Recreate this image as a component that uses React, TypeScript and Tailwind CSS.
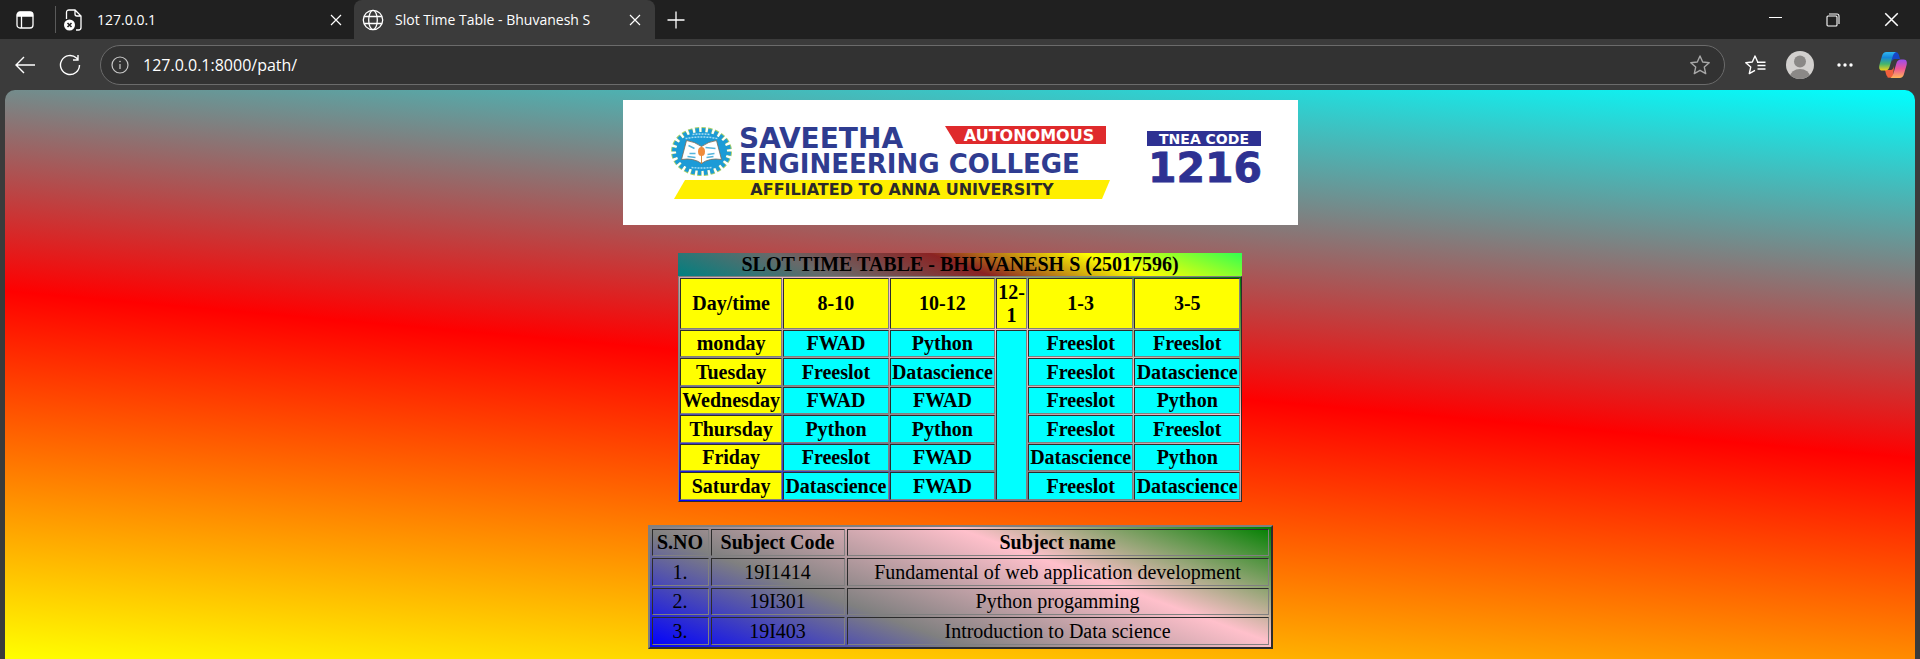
import React from "react";

const days: [string, string[]][] = [
  ["monday", ["FWAD", "Python", "Freeslot", "Freeslot"]],
  ["Tuesday", ["Freeslot", "Datascience", "Freeslot", "Datascience"]],
  ["Wednesday", ["FWAD", "FWAD", "Freeslot", "Python"]],
  ["Thursday", ["Python", "Python", "Freeslot", "Freeslot"]],
  ["Friday", ["Freeslot", "FWAD", "Datascience", "Python"]],
  ["Saturday", ["Datascience", "FWAD", "Freeslot", "Datascience"]],
];

const subjects = [
  ["1.", "19I1414", "Fundamental of web application development"],
  ["2.", "19I301", "Python progamming"],
  ["3.", "19I403", "Introduction to Data science"],
];

const edge = "border border-t-[#2c2c2c] border-l-[#2c2c2c] border-b-[#808080] border-r-[#808080] py-px";
const slot = "border border-t-[#2c2c2c] border-l-[#2c2c2c] border-b-[#808080] border-r-[#808080] bg-[#00ffff] p-px font-bold";
const head = "border border-t-[#2c2c2c] border-l-[#2c2c2c] border-b-[#808080] border-r-[#808080] bg-[#ffff00] p-px font-bold";

function CloseIcon({ className }: { className: string }) {
  return (
    <svg viewBox="0 0 12 12" className={className} fill="none" stroke="currentColor" strokeWidth="1.2" aria-hidden="true">
      <path d="M1 1 11 11M11 1 1 11" />
    </svg>
  );
}

function TabBar() {
  return (
    <div className="flex h-[39px] items-stretch bg-[#202020]">
      <button aria-label="Tab actions" className="flex w-[55px] items-center justify-center pr-1.5">
        <svg width="18" height="18" viewBox="0 0 18 18" fill="none" stroke="white" strokeWidth="1.3" aria-hidden="true">
          <rect x="1" y="1" width="16" height="16" rx="3" />
          <path d="M1.5 4Q1.5 1.5 4 1.5H14Q16.5 1.5 16.5 4V5H1.5Z" fill="white" />
          <path d="M5.5 5V17" />
        </svg>
      </button>
      <span className="my-1.5 w-px bg-[#5a5a5a]" />
      <div className="flex w-[298px] items-center gap-[15px] pl-2 pr-3">
        <svg width="18" height="22" viewBox="0 0 18 22" fill="none" stroke="white" strokeWidth="1.3" aria-hidden="true">
          <path d="M2.5 10V3.5Q2.5 1 5 1H11L17 7V18.5Q17 21 14.5 21H12M11 1V5Q11 7 13 7H17" />
          <circle cx="5.5" cy="16" r="5.5" fill="white" stroke="none" />
          <path d="m3.5 14 4 4m0-4-4 4" stroke="#202020" strokeWidth="1.6" />
        </svg>
        <span className="flex-1 text-sm text-white">127.0.0.1</span>
        <button aria-label="Close tab 127.0.0.1" className="text-white">
          <CloseIcon className="size-3" />
        </button>
      </div>
      <div className="flex w-[301px] items-center gap-[11px] rounded-t-lg bg-[#3b3b3b] pl-2 pr-3.5">
        <svg width="22" height="22" viewBox="0 0 22 22" fill="none" stroke="white" strokeWidth="1.3" aria-hidden="true">
          <circle cx="11" cy="11" r="9.7" />
          <ellipse cx="11" cy="11" rx="4.3" ry="9.7" />
          <path d="M2.2 7.5H19.8M2.2 14.5H19.8" />
        </svg>
        <span className="flex-1 whitespace-nowrap text-sm text-white">Slot Time Table - Bhuvanesh S</span>
        <button aria-label="Close tab Slot Time Table" className="text-white">
          <CloseIcon className="size-3" />
        </button>
      </div>
      <button aria-label="New tab" className="flex w-[42px] items-center justify-center">
        <svg width="18" height="18" viewBox="0 0 18 18" stroke="white" strokeWidth="1.3" aria-hidden="true">
          <path d="M9 0.5V17.5M0.5 9H17.5" />
        </svg>
      </button>
      <div className="ml-auto flex text-white">
        <button aria-label="Minimize" className="flex w-[58px] items-center justify-center">
          <svg width="13" height="13" viewBox="0 0 13 13" stroke="white" aria-hidden="true"><path d="M0 4.5H13" /></svg>
        </button>
        <button aria-label="Restore" className="flex w-[58px] items-center justify-center">
          <svg width="14" height="14" viewBox="0 0 14 14" fill="none" stroke="white" strokeWidth="1.1" aria-hidden="true">
            <rect x="1" y="3" width="10" height="10" rx="1" />
            <path d="M3 1H11Q13 1 13 3V11" />
          </svg>
        </button>
        <button aria-label="Close window" className="flex w-[58px] items-center justify-center">
          <CloseIcon className="size-[15px]" />
        </button>
      </div>
    </div>
  );
}

function Toolbar() {
  return (
    <div className="flex h-[51px] items-center bg-[#3b3b3b] pr-[13px]">
      <button aria-label="Back" className="flex w-[50px] items-center justify-center">
        <svg width="20" height="18" viewBox="0 0 20 18" fill="none" stroke="white" strokeWidth="1.4" aria-hidden="true">
          <path d="M20 9H1M9 1 1 9 9 17" />
        </svg>
      </button>
      <button aria-label="Refresh" className="mr-2.5 flex w-10 items-center justify-center">
        <svg width="22" height="22" viewBox="0 0 22 22" fill="none" stroke="white" strokeWidth="1.4" aria-hidden="true">
          <path d="M20.5 11A9.5 9.5 0 1 1 17.5 4.1L19 5.5M19 1V6H14" />
        </svg>
      </button>
      <div className="flex h-10 min-w-0 flex-1 items-center rounded-full border border-[#6b6b6b] bg-[#323232] pl-2.5 pr-3.5">
        <svg width="18" height="18" viewBox="0 0 18 18" fill="none" stroke="#c8c8c8" strokeWidth="1.2" aria-hidden="true">
          <circle cx="9" cy="9" r="8" />
          <path d="M9 8V13" />
          <circle cx="9" cy="5.5" r="0.8" fill="#c8c8c8" stroke="none" />
        </svg>
        <input
          aria-label="Address"
          type="text"
          defaultValue="127.0.0.1:8000/path/"
          className="ml-3.5 min-w-0 flex-1 bg-transparent text-base text-white outline-none"
        />
        <button aria-label="Add to favorites">
          <svg width="20" height="20" viewBox="0 0 20 20" fill="none" stroke="#a8a8a8" strokeWidth="1.4" strokeLinejoin="round" aria-hidden="true">
            <path d="m10 1 2.7 6 6.5.7-4.9 4.4 1.4 6.5L10 15.3 4.3 18.6l1.4-6.5L.8 7.7 7.3 7Z" />
          </svg>
        </button>
      </div>
      <button aria-label="Favorites" className="ml-5">
        <svg width="21" height="20" viewBox="0 0 21 20" fill="none" stroke="white" strokeWidth="1.4" strokeLinejoin="round" aria-hidden="true">
          <path d="M13.2 7H12.7L10 1 7.3 7 .8 7.7 5.7 12.1 4.3 18.6 10 15.3M12 7.3H16M12.5 10.5H20.5M12.5 14H20.5M16 7.3H20.5" />
        </svg>
      </button>
      <button aria-label="Profile" className="ml-5">
        <svg width="28" height="28" viewBox="0 0 28 28" aria-hidden="true">
          <clipPath id="avatar"><circle cx="14" cy="14" r="14" /></clipPath>
          <g clipPath="url(#avatar)">
            <path d="M0 0H28V28H0Z" fill="#d2d0ce" />
            <circle cx="14" cy="10.5" r="6" fill="#8a8886" />
            <ellipse cx="14" cy="26" rx="10" ry="8" fill="#8a8886" />
          </g>
        </svg>
      </button>
      <button aria-label="Settings and more" className="ml-[23px]">
        <svg width="16" height="4" viewBox="0 0 16 4" fill="white" aria-hidden="true">
          <circle cx="2" cy="2" r="1.7" /><circle cx="8" cy="2" r="1.7" /><circle cx="14" cy="2" r="1.7" />
        </svg>
      </button>
      <button aria-label="Copilot" className="ml-[26px]">
        <svg width="28" height="26" viewBox="0 0 28 26" aria-hidden="true">
          <defs>
            <linearGradient id="cpa" x1="0" y1="0" x2="0" y2="1"><stop offset="0" stopColor="#2fb6f0" /><stop offset=".3" stopColor="#1688d8" /><stop offset=".65" stopColor="#45b56c" /><stop offset="1" stopColor="#f2d21c" /></linearGradient>
            <linearGradient id="cpb" x1="0" y1="0" x2="0" y2="1"><stop offset="0" stopColor="#9a4dee" /><stop offset=".5" stopColor="#ee5596" /><stop offset="1" stopColor="#ffb657" /></linearGradient>
          </defs>
          <path d="M13 0H17Q19 0 20 3L21 7H16Q13.5 7 12.5 10Z" fill="#1746c8" />
          <path d="M7 26H12Q8 26 7 22L6 18H12Q14 18 15 14L14 25Z" fill="#f2603c" />
          <path d="M7.5 0H17Q14.5 1 13.5 5L10.5 15Q9.5 18.5 6 18.5H3.5Q-.8 18.5.4 13L3 4Q4 0 7.5 0Z" fill="url(#cpa)" />
          <path d="M20.5 26H11Q13.5 25 14.5 21L17.5 11Q18.5 7.5 22 7.5H24.5Q28.8 7.5 27.6 13L25 22Q24 26 20.5 26Z" fill="url(#cpb)" />
        </svg>
      </button>
    </div>
  );
}

function CollegeBanner() {
  return (
    <div className="flex h-[125px] w-[675px] max-w-full bg-white">
      <svg viewBox="0 0 675 125" className="size-full" role="img" aria-label="Saveetha Engineering College">
        <g transform="translate(78.5 51.5)">
          <ellipse rx="27.5" ry="21.5" fill="none" stroke="#a5cf6a" strokeWidth="6" pathLength="48" strokeDasharray="1.3 .7" />
          <ellipse rx="27" ry="21" fill="none" stroke="#1c9bd7" strokeWidth="5" pathLength="48" strokeDasharray="1.1 .9" strokeDashoffset="-.1" />
          <ellipse rx="25.5" ry="19.5" fill="#1c9bd7" />
          <path d="M-15-11Q-7-10 0-5 7-10 15-11L20 8Q8 6 0 12-8 6-20 8Z" fill="white" stroke="#7a6a55" strokeWidth=".8" />
          <path d="M0-5V12" stroke="#d98b3a" />
          <path d="M-13-6-7-3M-12 2H-6M-14 5-6 6M4-4 14-3M6 3 13 2M5 6 12 5" stroke="#54b4dc" strokeWidth="1.5" />
          <ellipse rx="3.5" ry="4.5" fill="#ef8b3c" />
          <path d="M-16-13Q0-16 16-13M-9-17Q0-18 9-17M-10 16Q0 17 10 16" fill="none" stroke="#a5dcf2" strokeWidth="1.5" strokeDasharray="2 1" />
        </g>
        <path d="M322 26H483V44H333Z" fill="#df2a2c" />
        <path d="M62 80H487L479 99H51Z" fill="#ffef00" />
        <path d="M524 31H638V46H524Z" fill="#2e3192" />
        <g className="font-['DejaVu_Sans',sans-serif] font-bold">
          <text x="116" y="48" fontSize="28" fill="#2f3c90">SAVEETHA</text>
          <text x="116" y="73" fontSize="26" fill="#2f3c90">ENGINEERING COLLEGE</text>
          <text x="406" y="41" textAnchor="middle" fontSize="16" fill="white">AUTONOMOUS</text>
          <text x="279" y="95" textAnchor="middle" fontSize="16" fill="#2b2a29">AFFILIATED TO ANNA UNIVERSITY</text>
          <text x="581" y="44" textAnchor="middle" fontSize="14" fill="white">TNEA CODE</text>
          <text x="582" y="82" textAnchor="middle" fontSize="41" fill="#2e3192" stroke="#2e3192" strokeWidth=".8">1216</text>
        </g>
      </svg>
    </div>
  );
}

export default function App() {
  return (
    <div className="flex min-h-screen flex-col bg-[#3b3b3b] font-['Open_Sans','Noto_Sans',sans-serif]">
      <header>
        <TabBar />
        <Toolbar />
      </header>
      <main className="mx-[5px] flex flex-1 flex-col items-center rounded-t-[10px] bg-[linear-gradient(5deg,yellow,red,cyan)] px-2.5 pt-2.5 pb-2.5 font-['Liberation_Serif',serif] text-xl leading-[23px] text-black">
        <CollegeBanner />
        <table className="mt-7 w-[564px] border-separate border-spacing-px border border-t-[#808080] border-l-[#808080] border-b-[#2c2c2c] border-r-[#2c2c2c] bg-[linear-gradient(20deg,blue,gray,pink,green)] text-center">
          <caption className="bg-[linear-gradient(20deg,teal,#696969,#8b2323,yellow,#32ff50)] font-bold">
            SLOT TIME TABLE - BHUVANESH S (25017596)
          </caption>
          <thead>
            <tr className="h-[51px]">
              <th className={head}>Day/time</th>
              <th className={head}>8-10</th>
              <th className={head}>10-12</th>
              <th className={head}>12-<br />1</th>
              <th className={head}>1-3</th>
              <th className={head}>3-5</th>
            </tr>
          </thead>
          <tbody>
            {days.map(([day, s], i) => (
              <tr key={day} className="h-[27px] even:h-7">
                <th className={head}>{day}</th>
                <td className={slot}>{s[0]}</td>
                <td className={slot}>{s[1]}</td>
                {i === 0 && <td rowSpan={6} className={slot} />}
                <td className={slot}>{s[2]}</td>
                <td className={slot}>{s[3]}</td>
              </tr>
            ))}
          </tbody>
        </table>
        <table className="mt-[23px] w-[625px] border-separate border-spacing-0.5 border-2 border-t-[#808080] border-l-[#808080] border-b-[#2c2c2c] border-r-[#2c2c2c] bg-[linear-gradient(20deg,blue,gray,pink,green)] text-center">
          <thead>
            <tr>
              <th className={`${edge} w-[57px]`}>S.NO</th>
              <th className={`${edge} w-[134px]`}>Subject Code</th>
              <th className={edge}>Subject name</th>
            </tr>
          </thead>
          <tbody>
            {subjects.map((row) => (
              <tr key={row[0]} className="odd:h-7">
                {row.map((cell) => (
                  <td key={cell} className={edge}>{cell}</td>
                ))}
              </tr>
            ))}
          </tbody>
        </table>
      </main>
    </div>
  );
}
